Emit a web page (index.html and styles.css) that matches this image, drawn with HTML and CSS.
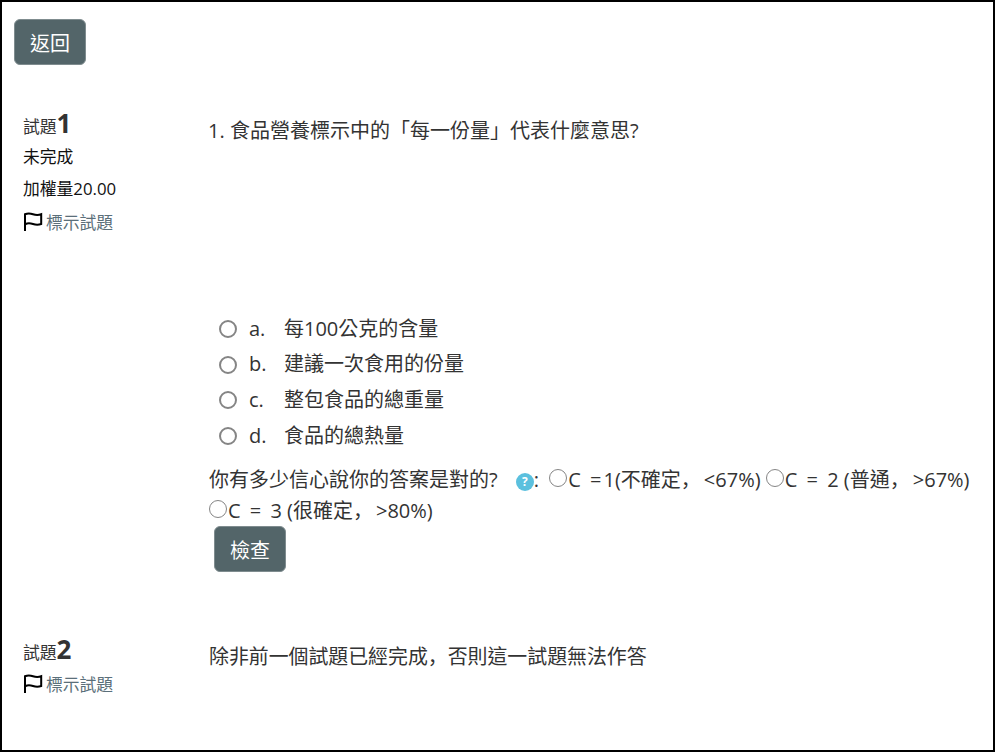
FILE: index.html
```html
<!DOCTYPE html>
<html lang="zh-Hant">
<head>
    <meta charset="UTF-8">
    <meta name="viewport" content="width=device-width, initial-scale=1.0">
    <title>試題</title>
    <link rel="stylesheet" href="styles.css">
</head>
<body>

    <div class="page">
        <button class="btn back-btn">返回</button>

        <div class="question first">
            <div class="info">
                <h3 class="qno">試題<span>1</span></h3>
                <div class="state">未完成</div>
                <div class="grade">加權量20.00</div>
                <a class="flag">
                    <svg width="20" height="20" viewBox="0 0 20 20"><path d="M2 19V2.2C5 1 7 1.2 10 2.2S15 3.4 18.2 2.2V12C15 13.2 13 13 10 12S5 10.8 2.6 12" fill="none" stroke="#000" stroke-width="2"/></svg>
                    標示試題
                </a>
            </div>
            <div class="content">
                <p class="qtext">1. 食品營養標示中的「每一份量」代表什麼意思?</p>
                <div class="answers">
                    <label class="answer"><input type="radio" name="q1"><span class="letter">a.</span>每100公克的含量</label>
                    <label class="answer"><input type="radio" name="q1"><span class="letter">b.</span>建議一次食用的份量</label>
                    <label class="answer"><input type="radio" name="q1"><span class="letter">c.</span>整包食品的總重量</label>
                    <label class="answer"><input type="radio" name="q1"><span class="letter">d.</span>食品的總熱量</label>
                </div>
                <div class="certainty">
                    你有多少信心說你的答案是對的?
                    <span class="help">?</span>: <label class="first-choice"><input type="radio" name="c1">C <span class="eq tight">=</span>1(不確定<span class="comma" lang="zh-Hans">，</span>&lt;67%)</label>
                    <label><input type="radio" name="c1">C <span class="eq">=</span> 2 (普通<span class="comma" lang="zh-Hans">，</span>&gt;67%)</label>
                    <label><input type="radio" name="c1">C <span class="eq">=</span> 3 (很確定<span class="comma" lang="zh-Hans">，</span>&gt;80%)</label>
                </div>
                <button class="btn check-btn">檢查</button>
            </div>
        </div>

        <div class="question">
            <div class="info">
                <h3 class="qno">試題<span>2</span></h3>
                <a class="flag">
                    <svg width="20" height="20" viewBox="0 0 20 20"><path d="M2 19V2.2C5 1 7 1.2 10 2.2S15 3.4 18.2 2.2V12C15 13.2 13 13 10 12S5 10.8 2.6 12" fill="none" stroke="#000" stroke-width="2"/></svg>
                    標示試題
                </a>
            </div>
            <div class="content">
                <p class="qtext blocked">除非前一個試題已經完成<span class="comma" lang="zh-Hans">，</span>否則這一試題無法作答</p>
            </div>
        </div>
    </div>

</body>
</html>
```

FILE: styles.css
```css
html, body {
    margin: 0;
    padding: 0;
    height: 100%;
}

body {
    font-family: "Open Sans", "Noto Sans CJK TC", sans-serif;
    font-size: 20px;
    color: #333;
    background-color: #fff;
}

.page {
    box-sizing: border-box;
    height: 752px;
    overflow: hidden;
    border: 2px solid #000;
    padding: 17px 12px 0 12px;
}

.btn {
    display: block;
    width: 72px;
    height: 46px;
    padding: 0;
    background-color: #536569;
    color: #fff;
    border: 1px solid #7f8c8f;
    border-radius: 6px;
    font-family: inherit;
    font-size: 20px;
}

.question {
    display: flex;
    margin-top: 62px;
}

.question.first {
    margin-top: 43px;
}

.info {
    width: 185px;
    padding-left: 9px;
    flex-shrink: 0;
    font-size: 16.8px;
    color: #111;
}

.qno {
    margin: 0;
    height: 30px;
    line-height: 30px;
    font-size: 1em;
    font-weight: normal;
    color: #333;
}

.qno span {
    font-size: 26px;
    font-weight: bold;
}

.state, .grade {
    height: 32px;
    line-height: 32px;
}

.state {
    margin-top: 3px;
}

.flag {
    display: flex;
    align-items: center;
    gap: 3px;
    height: 32px;
    margin-top: 1px;
    color: #5b6f7a;
}

.qno + .flag {
    margin-top: 4px;
}

.content {
    flex: 1;
    line-height: 30px;
}

.qtext {
    margin: 8px 0 0 0;
    height: 30px;
}

.qtext.blocked {
    margin: 7px 0 0 1px;
    font-size: 19.9px;
}

.comma {
    font-family: "Noto Sans CJK SC", sans-serif;
}

.certainty .comma {
    margin-right: 3px;
}

.answers {
    margin-top: 165px;
}

.answer {
    display: flex;
    align-items: center;
    height: 35.6px;
    padding-left: 11px;
}

input[type="radio"] {
    appearance: none;
    box-sizing: border-box;
    width: 18px;
    height: 18px;
    border: 1.7px solid #858585;
    border-radius: 50%;
    background-color: #fff;
}

.answer input {
    margin: 1px 12px 0 0;
    border-width: 2px;
}

.letter {
    width: 35px;
}

.certainty {
    margin: 11px 0 0 1px;
    line-height: 30px;
}

.certainty label {
    white-space: nowrap;
}

.certainty input {
    margin: 0 1px 0 0;
    vertical-align: 0;
}

.first-choice {
    margin-left: 5px;
}

.eq {
    margin: 0 4px;
}

.eq.tight {
    margin-right: 2px;
}

.help {
    display: inline-block;
    width: 18px;
    height: 18px;
    margin-left: 13px;
    border-radius: 50%;
    background-color: #5bc0de;
    color: #fff;
    font-size: 12px;
    font-weight: bold;
    line-height: 18px;
    text-align: center;
    vertical-align: 1px;
}

.check-btn {
    margin: 0 0 0 6px;
}
```
